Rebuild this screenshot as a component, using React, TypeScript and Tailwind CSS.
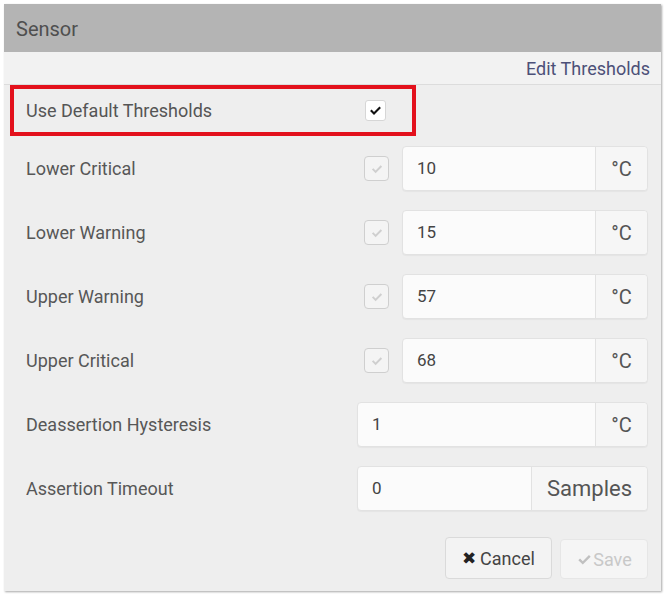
import React from "react";

const FONT = { fontFamily: "Roboto, 'Liberation Sans', sans-serif" };

type Row = { label: string; value: string; unit: string; check?: boolean; unitW?: string };

const rows: Row[] = [
  { label: "Lower Critical", value: "10", unit: "°C", check: true },
  { label: "Lower Warning", value: "15", unit: "°C", check: true },
  { label: "Upper Warning", value: "57", unit: "°C", check: true },
  { label: "Upper Critical", value: "68", unit: "°C", check: true },
  { label: "Deassertion Hysteresis", value: "1", unit: "°C" },
  { label: "Assertion Timeout", value: "0", unit: "Samples", unitW: "w-[116px]" },
];

const CheckMark = ({ className }: { className: string }) => (
  <svg viewBox="0 0 16 16" className={className} fill="currentColor">
    <path d="M2.2 8.6l1.6-1.6 2.6 2.6 5.8-5.8 1.6 1.6-7.4 7.4z" />
  </svg>
);

export default function App() {
  return (
    <div className="w-[667px] h-[598px] bg-white pt-[4px] pl-[4px]" style={FONT}>
      <div className="w-[657px] h-[587px] bg-[#eeeeee] flex flex-col shadow-[1px_1px_2px_rgba(0,0,0,0.35)]">
        {/* Header */}
        <div className="h-[48px] bg-[#b4b4b4] flex items-center pl-[12px] pt-[2px] text-[20px] text-[#4f4f4f]">Sensor</div>

        {/* Edit link strip */}
        <div className="h-[33px] bg-[#f2f2f2] border-b border-[#dcdcdc] flex items-center justify-end pr-[11px]">
          <span className="text-[18px] text-[#4c5078]">Edit Thresholds</span>
        </div>

        {/* Use defaults row, highlighted */}
        <div className="ml-[6px] w-[406px] h-[51px] border-[4px] border-[#e3111c] flex items-center pl-[12px]">
          <span className="text-[18px] text-[#555] flex-1">Use Default Thresholds</span>
          <span className="w-[21px] h-[21px] rounded-[3px] bg-white border border-[#d6d6d6] flex items-center justify-center mr-[26px]">
            <CheckMark className="w-[15px] h-[15px] text-[#111]" />
          </span>
        </div>

        {/* Threshold rows */}
        <div className="flex flex-col gap-[19px] mt-[10px] pl-[22px] pr-[13px]">
          {rows.map((r) => (
            <div key={r.label} className="h-[45px] flex items-center">
              <span className="w-[331px] text-[18px] text-[#575757]">{r.label}</span>
              {r.check && (
                <span className="w-[25px] h-[25px] ml-[7px] mr-[13px] rounded-[4px] bg-[#f4f4f4] border border-[#cfcfcf] flex items-center justify-center">
                  <CheckMark className="w-[14px] h-[14px] text-[#cfcfcf]" />
                </span>
              )}
              <div className="flex-1 h-[45px] flex rounded-[4px] border border-[#e2e2e2] bg-[#fbfbfb] shadow-[0_1px_1px_rgba(0,0,0,0.04)]">
                <span className="flex-1 flex items-center pl-[14px] text-[17px] text-[#444]">{r.value}</span>
                <span
                  className={`${r.unitW ?? "w-[52px]"} border-l border-[#e2e2e2] bg-[#f6f6f6] flex items-center justify-center rounded-r-[4px] ${
                    r.unit === "Samples" ? "text-[22px]" : "text-[20px]"
                  } text-[#555]`}
                >
                  {r.unit}
                </span>
              </div>
            </div>
          ))}
        </div>

        {/* Buttons */}
        <div className="flex justify-end gap-[8px] mt-[26px] pr-[13px]">
          <button className="w-[107px] h-[42px] rounded-[4px] bg-[#f3f3f3] border border-[#dadada] flex items-center justify-center gap-[4px] text-[18px] text-[#444]">
            <span className="text-[17px] text-[#222] leading-none">✖</span>
            Cancel
          </button>
          <button className="w-[88px] h-[40px] mt-[2px] rounded-[4px] bg-[#f5f5f5] border border-[#e6e6e6] flex items-center justify-center text-[18px] text-[#c8c8c8]">
            <CheckMark className="w-[17px] h-[17px] text-[#c0c0c0]" />
            Save
          </button>
        </div>
      </div>
    </div>
  );
}
